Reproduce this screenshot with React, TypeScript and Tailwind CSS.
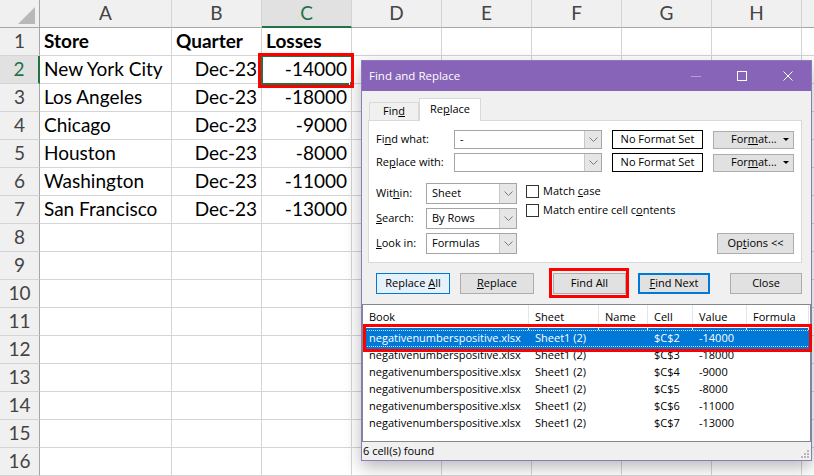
import React from 'react';

const GRID_COLS = [
  { key: 'A', w: 'w-[132px]' },
  { key: 'B', w: 'w-[90px]' },
  { key: 'C', w: 'w-[90px]' },
  { key: 'D', w: 'w-[90px]' },
  { key: 'E', w: 'w-[90px]' },
  { key: 'F', w: 'w-[90px]' },
  { key: 'G', w: 'w-[90px]' },
  { key: 'H', w: 'w-[90px]' },
  { key: '', w: 'w-[90px]' },
];

const SHEET_ROWS: string[][] = [
  ['Store', 'Quarter', 'Losses'],
  ['New York City', 'Dec-23', '-14000'],
  ['Los Angeles', 'Dec-23', '-18000'],
  ['Chicago', 'Dec-23', '-9000'],
  ['Houston', 'Dec-23', '-8000'],
  ['Washington', 'Dec-23', '-11000'],
  ['San Francisco', 'Dec-23', '-13000'],
];

const RESULTS = [
  { cell: '$C$2', value: '-14000' },
  { cell: '$C$3', value: '-18000' },
  { cell: '$C$4', value: '-9000' },
  { cell: '$C$5', value: '-8000' },
  { cell: '$C$6', value: '-11000' },
  { cell: '$C$7', value: '-13000' },
];

// list columns: Book, Sheet, Name, Cell, Value, Formula
const LIST_COLS = [
  { label: 'Book', w: 'w-[166px]' },
  { label: 'Sheet', w: 'w-[70px]' },
  { label: 'Name', w: 'w-[49px]' },
  { label: 'Cell', w: 'w-[45px]' },
  { label: 'Value', w: 'w-[54px]' },
  { label: 'Formula', w: 'w-[62px]' },
];

function Sheet() {
  return (
    <div className="flex flex-col">
      {/* column headers */}
      <div className="flex h-[28px] bg-[#f0f0f0]">
        <div className="relative w-[40px] shrink-0 border-b border-r border-[#a6a6a6]">
          <div className="absolute bottom-[3px] right-[4px] h-0 w-0 border-b-[17px] border-l-[17px] border-b-[#b8b8b8] border-l-transparent" />
        </div>
        {GRID_COLS.map((c, ci) => (
          <div
            key={ci}
            className={`${c.w} flex shrink-0 items-center justify-center border-r border-[#d4d4d4] text-[19px] ${
              c.key === 'C'
                ? 'border-b-2 border-b-[#217346] bg-[#e1e1e1] text-[#217346]'
                : 'border-b border-b-[#a6a6a6] text-[#444]'
            }`}
          >
            {c.key}
          </div>
        ))}
      </div>

      {Array.from({ length: 16 }).map((_, i) => {
        const n = i + 1;
        const data = SHEET_ROWS[i] || [];
        return (
          <div key={n} className="flex h-[28px]">
            <div
              className={`flex w-[40px] shrink-0 items-center justify-center border-b border-b-[#d4d4d4] text-[19px] ${
                n === 2
                  ? 'border-r-2 border-r-[#217346] bg-[#e1e1e1] text-[#217346]'
                  : 'border-r border-r-[#a6a6a6] bg-[#f0f0f0] text-[#444]'
              }`}
            >
              {n}
            </div>
            {GRID_COLS.map((c, ci) => {
              const val = data[ci] || '';
              const right = n > 1 && ci > 0;
              return (
                <div
                  key={ci}
                  className={`${c.w} flex shrink-0 items-center overflow-visible whitespace-nowrap border-b border-r border-[#d4d4d4] px-[4px] text-[19px] ${
                    right ? 'justify-end' : 'justify-start'
                  } ${n === 1 ? 'font-bold' : ''}`}
                >
                  {val}
                </div>
              );
            })}
          </div>
        );
      })}

      {/* active cell C2 */}
      <div className="absolute left-[261px] top-[55px] h-[30px] w-[92px] border-2 border-[#217346]">
        <div className="absolute -bottom-[3px] -right-[3px] h-[5px] w-[5px] border border-white bg-[#217346]" />
      </div>
    </div>
  );
}

function Chevron() {
  return (
    <svg width="9" height="5" viewBox="0 0 9 5" fill="none">
      <polyline points="0.5,0.5 4.5,4.5 8.5,0.5" stroke="#7a7a7a" strokeWidth="1" />
    </svg>
  );
}

function Combo({ w, text, h }: { w: string; text: string; h: string }) {
  return (
    <div className={`${w} ${h} flex shrink-0 border border-[#a5a5a5] bg-white`}>
      <div className="flex flex-1 items-center pl-[5px]">{text}</div>
      <div className="flex w-[17px] items-center justify-center border-l border-[#c8c8c8] bg-[#e6e6e6]">
        <Chevron />
      </div>
    </div>
  );
}

function Btn({ children, cls, w }: { children: React.ReactNode; cls?: string; w: string }) {
  return (
    <div
      className={`${w} flex h-[21px] shrink-0 items-center justify-center ${
        cls || 'border border-[#adadad] bg-[#e1e1e1]'
      }`}
    >
      <span className="whitespace-pre">{children}</span>
    </div>
  );
}

function FormatBtn() {
  return (
    <div className="flex h-[18px] w-[81px] shrink-0 items-center border border-[#adadad] bg-[#e1e1e1] pl-[17px] pr-[4px]">
      <span>
        For<span className="underline">m</span>at...
      </span>
      <div className="ml-auto h-0 w-0 border-l-[3px] border-r-[3px] border-t-[3px] border-l-transparent border-r-transparent border-t-black" />
    </div>
  );
}

function Checkbox({ children }: { children: React.ReactNode }) {
  return (
    <div className="flex h-[18px] items-center">
      <div className="h-[13px] w-[13px] border border-[#333] bg-white" />
      <span className="ml-[4px]">{children}</span>
    </div>
  );
}

function FindReplaceDialog() {
  return (
    <div className="absolute left-[361px] top-[60px] flex h-[401px] w-[451px] flex-col border border-[#8b7bb8] bg-[#f0f0f0] font-['Open_Sans',sans-serif] text-[11px] text-black shadow-[0_6px_16px_rgba(0,0,0,0.28)]">
      {/* title bar */}
      <div className="flex h-[30px] shrink-0 items-center bg-[#8764b8] text-white">
        <span className="pl-[7px] text-[11.5px]">Find and Replace</span>
        <div className="ml-auto flex h-full">
          <div className="flex w-[46px] items-center justify-center">
            <div className="h-px w-[10px] bg-[#b3a2d4]" />
          </div>
          <div className="flex w-[46px] items-center justify-center">
            <div className="h-[10px] w-[10px] border border-white" />
          </div>
          <div className="flex w-[46px] items-center justify-center">
            <svg width="10" height="10" viewBox="0 0 10 10">
              <path d="M0.5 0.5 L9.5 9.5 M9.5 0.5 L0.5 9.5" stroke="white" strokeWidth="1" />
            </svg>
          </div>
        </div>
      </div>

      {/* tabs */}
      <div className="mt-[7px] flex h-[22px] items-end pl-[7px]">
        <div className="flex h-[18px] w-[50px] items-center justify-center border border-b-0 border-[#d9d9d9]">
          Fin<span className="underline">d</span>
        </div>
        <div className="relative z-10 -mb-px flex h-[23px] w-[62px] items-center justify-center border border-b-0 border-[#d9d9d9] bg-white pb-[2px]">
          Re<span className="underline">p</span>lace
        </div>
      </div>

      {/* tab panel */}
      <div className="ml-[6px] h-[143px] w-[434px] shrink-0 border border-[#d9d9d9] bg-white px-[7px] pt-[9px]">
        <div className="flex h-[19px] items-center">
          <span className="w-[78px] shrink-0">
            Fi<span className="underline">n</span>d what:
          </span>
          <Combo w="w-[148px]" h="h-[19px]" text="-" />
          <div className="ml-[10px] flex h-[19px] w-[91px] shrink-0 items-center justify-center border border-black">
            No Format Set
          </div>
          <div className="ml-[10px]">
            <FormatBtn />
          </div>
        </div>
        <div className="mt-[4px] flex h-[19px] items-center">
          <span className="w-[78px] shrink-0">
            Re<span className="underline">p</span>lace with:
          </span>
          <Combo w="w-[148px]" h="h-[19px]" text="" />
          <div className="ml-[10px] flex h-[19px] w-[91px] shrink-0 items-center justify-center border border-black">
            No Format Set
          </div>
          <div className="ml-[10px]">
            <FormatBtn />
          </div>
        </div>

        <div className="mt-[11px] flex">
          <div className="flex flex-col gap-[4px]">
            <div className="flex h-[21px] items-center">
              <span className="w-[50px] shrink-0">
                Wit<span className="underline">h</span>in:
              </span>
              <Combo w="w-[91px]" h="h-[21px]" text="Sheet" />
            </div>
            <div className="flex h-[21px] items-center">
              <span className="w-[50px] shrink-0">
                <span className="underline">S</span>earch:
              </span>
              <Combo w="w-[91px]" h="h-[21px]" text="By Rows" />
            </div>
            <div className="flex h-[21px] items-center">
              <span className="w-[50px] shrink-0">
                <span className="underline">L</span>ook in:
              </span>
              <Combo w="w-[91px]" h="h-[21px]" text="Formulas" />
            </div>
          </div>
          <div className="-mt-px ml-[9px] flex flex-col gap-[1px]">
            <Checkbox>
              Match <span className="underline">c</span>ase
            </Checkbox>
            <Checkbox>
              Match entire cell c<span className="underline">o</span>ntents
            </Checkbox>
          </div>
          <div className="ml-auto self-end">
            <Btn w="w-[77px]">
              Op<span className="underline">t</span>ions &lt;&lt;
            </Btn>
          </div>
        </div>
      </div>

      {/* action buttons */}
      <div className="mt-[10px] flex h-[21px] shrink-0">
        <div className="ml-[14px]">
          <Btn w="w-[74px]" cls="border border-[#0078d7] bg-[#e5f1fb]">
            Replace <span className="underline">A</span>ll
          </Btn>
        </div>
        <div className="ml-[10px]">
          <Btn w="w-[74px]">
            <span className="underline">R</span>eplace
          </Btn>
        </div>
        <div className="ml-[19px]">
          <Btn w="w-[73px]">Find All</Btn>
        </div>
        <div className="ml-[12px]">
          <Btn w="w-[72px]" cls="border-2 border-[#0078d7] bg-[#e1e1e1]">
            <span className="underline">F</span>ind Next
          </Btn>
        </div>
        <div className="ml-[20px]">
          <Btn w="w-[72px]">Close</Btn>
        </div>
      </div>

      {/* results list */}
      <div className="mt-[10px] h-[138px] shrink-0 border border-[#828790] bg-white">
        <div className="flex h-[25px]">
          {LIST_COLS.map((c) => (
            <div key={c.label} className={`${c.w} flex shrink-0 items-center border-r border-[#e5e5e5] pl-[6px]`}>
              {c.label}
            </div>
          ))}
        </div>
        {RESULTS.map((r, i) => {
          const sel = i === 0;
          const cells = ['negativenumberspositive.xlsx', 'Sheet1 (2)', '', r.cell, r.value, ''];
          return (
            <div
              key={r.cell}
              className={`flex h-[17px] ${
                sel
                  ? 'bg-[#0078d7] text-white shadow-[0_2px_0_#0078d7,0_-2px_0_#0078d7] outline-1 -outline-offset-1 outline-dotted outline-[#cfe3f7]'
                  : ''
              }`}
            >
              {LIST_COLS.map((c, ci) => (
                <div key={c.label} className={`${c.w} flex shrink-0 items-center whitespace-nowrap pl-[6px]`}>
                  {cells[ci]}
                </div>
              ))}
            </div>
          );
        })}
      </div>

      {/* status bar */}
      <div className="relative flex flex-1 items-center pl-px">
        6 cell(s) found
        <svg className="absolute bottom-[2px] right-[2px]" width="8" height="8" viewBox="0 0 8 8">
          <rect x="6" y="0" width="2" height="2" fill="#b8b8b8" />
          <rect x="3" y="3" width="2" height="2" fill="#b8b8b8" />
          <rect x="6" y="3" width="2" height="2" fill="#b8b8b8" />
          <rect x="0" y="6" width="2" height="2" fill="#b8b8b8" />
          <rect x="3" y="6" width="2" height="2" fill="#b8b8b8" />
          <rect x="6" y="6" width="2" height="2" fill="#b8b8b8" />
        </svg>
      </div>
    </div>
  );
}

export default function App() {
  return (
    <div className="relative h-[476px] w-[814px] overflow-hidden bg-white font-['Lato',sans-serif] text-black">
      <Sheet />
      <FindReplaceDialog />

      {/* red callouts */}
      <div className="pointer-events-none absolute left-[258px] top-[53px] h-[35px] w-[96px] border-[3px] border-[#ff0000]" />
      <div className="pointer-events-none absolute left-[549px] top-[268px] h-[30px] w-[80px] border-[3px] border-[#ff0000]" />
      <div className="pointer-events-none absolute left-[363px] top-[324px] h-[28px] w-[449px] border-[3px] border-[#ff0000]" />
    </div>
  );
}
